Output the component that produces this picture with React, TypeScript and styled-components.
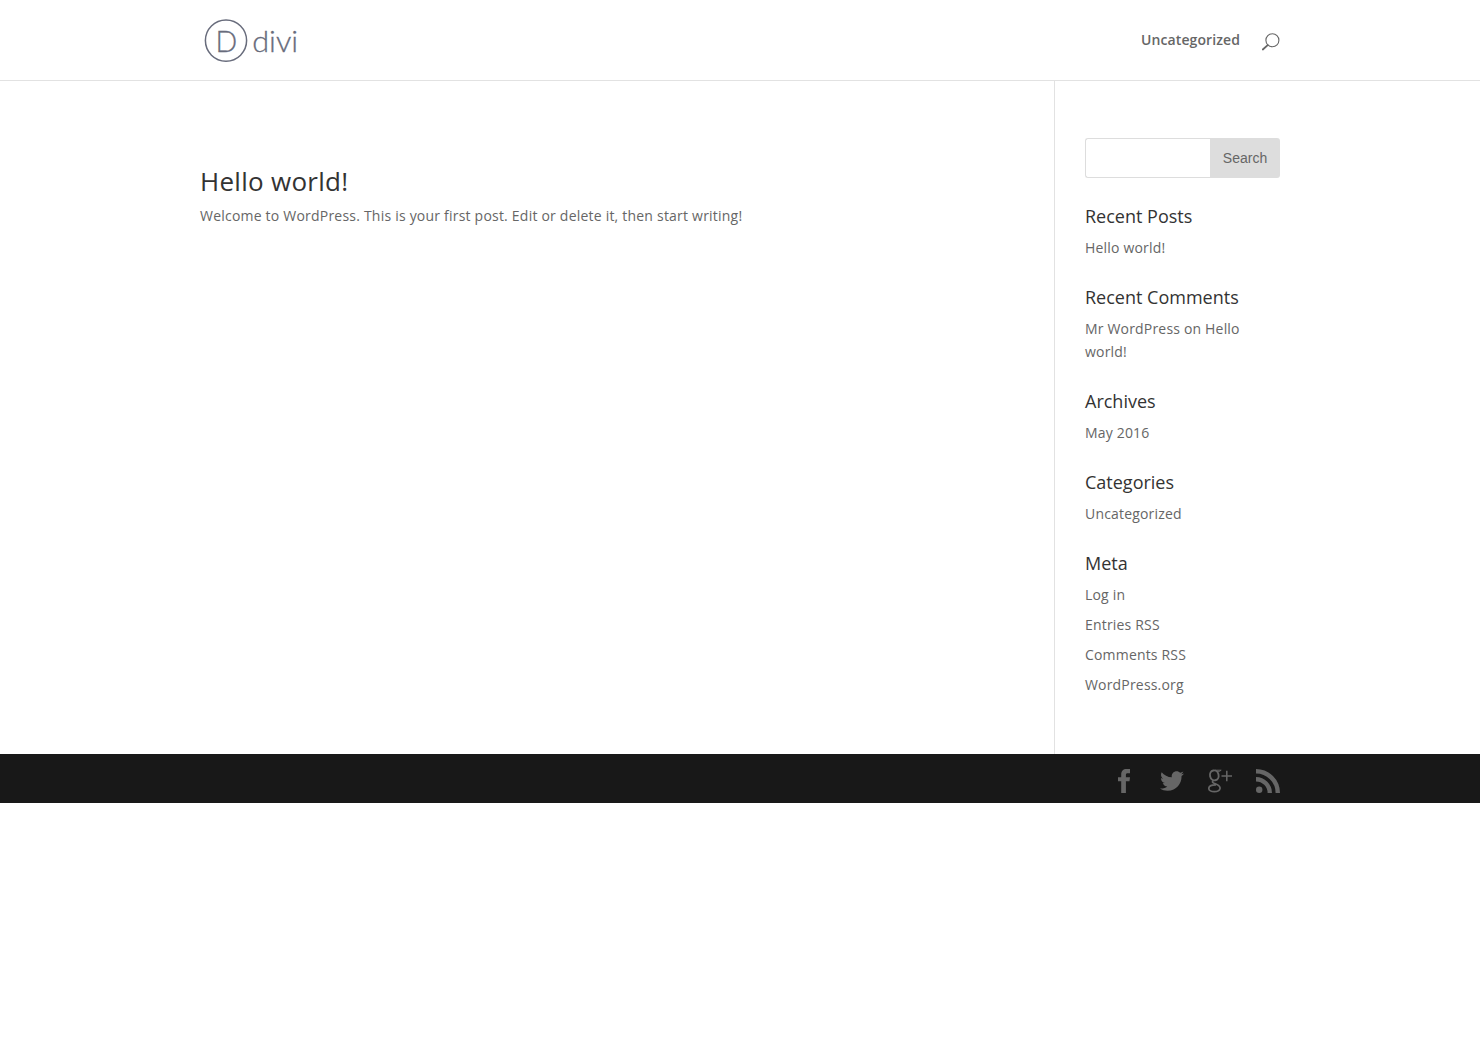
import React from 'react';
import styled, { createGlobalStyle } from 'styled-components';
import { FaTwitter } from 'react-icons/fa';

const GlobalStyle = createGlobalStyle`
  *, *::before, *::after { box-sizing: border-box; }
  body {
    margin: 0;
    background: #fff;
    color: #666;
    font: 400 14px/23px 'Open Sans', Arial, sans-serif;
  }
  a { color: inherit; text-decoration: none; }
`;

const Header = styled.header`
  height: 81px;
  border-bottom: 1px solid #e2e2e2;
`;

const Container = styled.div`
  width: 1080px;
  margin: 0 auto;
  display: flex;
`;

const HeaderRow = styled(Container)`
  height: 80px;
  justify-content: space-between;
`;

const Logo = styled.svg`
  display: block;
  width: 102px;
  height: 80px;
`;

const LogoText = styled.text`
  font-family: Lato, sans-serif;
  font-weight: 300;
  fill: #686c7c;
  stroke: #686c7c;
  stroke-width: 0.3px;
`;

const Nav = styled.nav`
  display: flex;
  align-items: center;
  gap: 22px;
  font-weight: 600;
  line-height: 20px;
  letter-spacing: 0.1px;
`;

const SearchIcon = styled.svg`
  display: block;
  width: 18px;
  height: 18px;
  margin-top: 3px;
`;

const Main = styled(Container)`
  height: 673px;
`;

const Content = styled.main`
  width: 855px;
  padding-top: 86px;
  border-right: 1px solid #e2e2e2;
`;

const PostTitle = styled.h1`
  margin: 0 0 9px;
  color: #333;
  font-size: 26px;
  font-weight: 400;
  line-height: 28px;
  letter-spacing: 0.28px;
`;

const Paragraph = styled.p`
  margin: 0;
  letter-spacing: 0.213px;
`;

const Sidebar = styled.aside`
  width: 225px;
  padding: 57px 0 0 30px;
`;

const SearchForm = styled.form`
  display: flex;
  height: 40px;
  margin-bottom: 29px;
`;

const SearchInput = styled.input`
  width: 125px;
  border: 1px solid #ddd;
  border-right: 0;
  border-radius: 3px 0 0 3px;
  background: #fff;
  padding: 0 8px;
  outline: 0;
`;

const SearchButton = styled.button`
  width: 70px;
  padding: 0;
  border: 0;
  border-radius: 0 3px 3px 0;
  background: #ddd;
  color: #666;
  font: 14px 'Liberation Sans', Arial, sans-serif;
`;

const WidgetBox = styled.section`
  margin-bottom: 29px;
`;

const WidgetTitle = styled.h4`
  margin: 0 0 11px;
  color: #333;
  font-size: 18px;
  font-weight: 400;
  line-height: 18px;
`;

const WidgetList = styled.ul`
  display: grid;
  gap: 7px;
  margin: 0;
  padding: 0;
  list-style: none;
  letter-spacing: 0.18px;
`;

const Footer = styled.footer`
  height: 49px;
  background: #181818;
`;

const SocialRow = styled(Container)`
  height: 49px;
  padding-top: 5px;
  align-items: center;
  justify-content: flex-end;
  gap: 24px;
  color: #666;
`;

const SocialLink = styled.a`
  display: flex;
  width: 24px;
  height: 24px;

  svg { width: 24px; height: 24px; }
`;

const widgets = [
  { title: 'Recent Posts', items: ['Hello world!'] },
  { title: 'Recent Comments', items: ['Mr WordPress on Hello world!'] },
  { title: 'Archives', items: ['May 2016'] },
  { title: 'Categories', items: ['Uncategorized'] },
  { title: 'Meta', items: ['Log in', 'Entries RSS', 'Comments RSS', 'WordPress.org'] },
];

const FacebookIcon = () => (
  <svg viewBox="0 0 24 24" fill="currentColor">
    <path d="M9.2 24V12.3H6V8.2h3.2V5.6C9.2 2 11.2 0 14.5 0H18v4.3h-2.2c-1.5 0-1.9.6-1.9 1.9v2h4.1l-.5 4.1h-3.6V24z" />
  </svg>
);

const GooglePlusIcon = () => (
  <svg viewBox="0 0 24 24" fill="none" stroke="currentColor">
    <ellipse cx="6.3" cy="6.4" rx="4.3" ry="5" strokeWidth="1.9" transform="rotate(-12 6.3 6.4)" />
    <path d="M7 1.2h6.2l-1.7 1.1H8.7" strokeWidth="1" />
    <path d="M5.4 11.4c-2.2 2 .1 2.7 2.4 3.6 3 1.2 4.7 2.2 4.2 4.6-.5 2.2-2.8 3.1-5.6 3.1-3.2 0-5.6-1.1-5.6-3.3 0-2.5 2.9-3.7 7.2-3.6" strokeWidth="1.7" />
    <path d="M18.8 1.7v10.6M13.5 7H24" strokeWidth="1.5" />
  </svg>
);

const RssIcon = () => (
  <svg viewBox="0 0 24 24" fill="none" stroke="currentColor" strokeWidth="4.4">
    <circle cx="3.2" cy="20.8" r="3.2" fill="currentColor" stroke="none" />
    <path d="M0 10.2A13.8 13.8 0 0 1 13.8 24M0 2.2A21.8 21.8 0 0 1 21.8 24" />
  </svg>
);

export default function App() {
  return (
    <>
      <GlobalStyle />
      <Header>
        <HeaderRow>
          <a href="#" aria-label="Divi">
            <Logo viewBox="0 0 102 80">
              <circle cx="26" cy="40.6" r="20.6" fill="none" stroke="#686c7c" strokeWidth="1.5" />
              <LogoText x="15.6" y="51.7" fontSize="30" textLength="21.7" lengthAdjust="spacingAndGlyphs">D</LogoText>
              <LogoText x="52.2" y="51.8" fontSize="29" textLength="46" lengthAdjust="spacingAndGlyphs">divi</LogoText>
            </Logo>
          </a>
          <Nav>
            <a href="#">Uncategorized</a>
            <SearchIcon viewBox="0 0 18 18" fill="none" stroke="#666" aria-label="Search">
              <circle cx="10.4" cy="7.3" r="6.5" strokeWidth="1.1" />
              <path d="M5.7 12.1.8 16.5" strokeWidth="1.8" strokeLinecap="round" />
            </SearchIcon>
          </Nav>
        </HeaderRow>
      </Header>
      <Main>
        <Content>
          <PostTitle>Hello world!</PostTitle>
          <Paragraph>Welcome to WordPress. This is your first post. Edit or delete it, then start writing!</Paragraph>
        </Content>
        <Sidebar>
          <SearchForm>
            <SearchInput aria-label="Search for" />
            <SearchButton type="button">Search</SearchButton>
          </SearchForm>
          {widgets.map(({ title, items }) => (
            <WidgetBox key={title}>
              <WidgetTitle>{title}</WidgetTitle>
              <WidgetList>
                {items.map((item) => (
                  <li key={item}><a href="#">{item}</a></li>
                ))}
              </WidgetList>
            </WidgetBox>
          ))}
        </Sidebar>
      </Main>
      <Footer>
        <SocialRow>
          <SocialLink href="#" aria-label="Facebook"><FacebookIcon /></SocialLink>
          <SocialLink href="#" aria-label="Twitter"><FaTwitter /></SocialLink>
          <SocialLink href="#" aria-label="Google Plus"><GooglePlusIcon /></SocialLink>
          <SocialLink href="#" aria-label="RSS"><RssIcon /></SocialLink>
        </SocialRow>
      </Footer>
    </>
  );
}
